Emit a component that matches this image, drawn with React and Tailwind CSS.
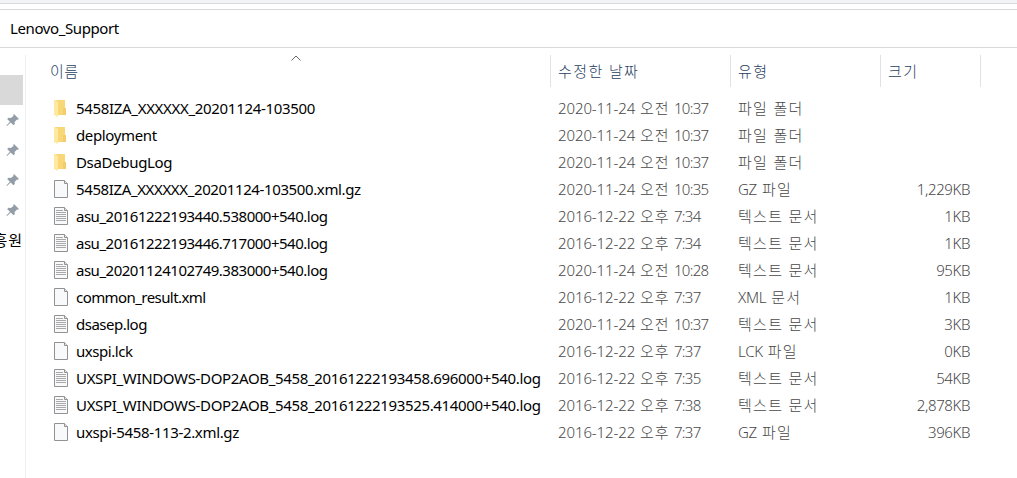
import clsx from 'clsx';

const files = [
    { name: '5458IZA_XXXXXX_20201124-103500', date: '2020-11-24', half: '오전', time: '10:37', kind: 'folder', type: '파일 폴더', tracking: 'tracking-[-0.32px]' },
    { name: 'deployment', date: '2020-11-24', half: '오전', time: '10:37', kind: 'folder', type: '파일 폴더', tracking: 'tracking-[-0.36px]' },
    { name: 'DsaDebugLog', date: '2020-11-24', half: '오전', time: '10:37', kind: 'folder', type: '파일 폴더', tracking: 'tracking-[-0.33px]' },
    { name: '5458IZA_XXXXXX_20201124-103500.xml.gz', date: '2020-11-24', half: '오전', time: '10:35', kind: 'file', ext: 'GZ', type: '파일', size: '1,229KB', tracking: 'tracking-[-0.38px]' },
    { name: 'asu_20161222193440.538000+540.log', date: '2016-12-22', half: '오후', time: '7:34', kind: 'text', type: '텍스트 문서', size: '1KB', tracking: 'tracking-[-0.49px]' },
    { name: 'asu_20161222193446.717000+540.log', date: '2016-12-22', half: '오후', time: '7:34', kind: 'text', type: '텍스트 문서', size: '1KB', tracking: 'tracking-[-0.49px]' },
    { name: 'asu_20201124102749.383000+540.log', date: '2020-11-24', half: '오전', time: '10:28', kind: 'text', type: '텍스트 문서', size: '95KB', tracking: 'tracking-[-0.49px]' },
    { name: 'common_result.xml', date: '2016-12-22', half: '오후', time: '7:37', kind: 'file', ext: 'XML', type: '문서', size: '1KB', tracking: 'tracking-[-0.57px]' },
    { name: 'dsasep.log', date: '2020-11-24', half: '오전', time: '10:37', kind: 'text', type: '텍스트 문서', size: '3KB', tracking: 'tracking-[-0.5px]' },
    { name: 'uxspi.lck', date: '2016-12-22', half: '오후', time: '7:37', kind: 'file', ext: 'LCK', type: '파일', size: '0KB', tracking: 'tracking-[-0.45px]' },
    { name: 'UXSPI_WINDOWS-DOP2AOB_5458_20161222193458.696000+540.log', date: '2016-12-22', half: '오후', time: '7:35', kind: 'text', type: '텍스트 문서', size: '54KB', tracking: 'tracking-[-0.34px]' },
    { name: 'UXSPI_WINDOWS-DOP2AOB_5458_20161222193525.414000+540.log', date: '2016-12-22', half: '오후', time: '7:38', kind: 'text', type: '텍스트 문서', size: '2,878KB', tracking: 'tracking-[-0.34px]' },
    { name: 'uxspi-5458-113-2.xml.gz', date: '2016-12-22', half: '오후', time: '7:37', kind: 'file', ext: 'GZ', type: '파일', size: '396KB', tracking: 'tracking-[-0.34px]' },
];

const FolderIcon = () => (
    <svg width="16" height="20" viewBox="0 0 16 20">
        <path d="M2 2h10v8h1v7H2z" fill="#f7d778" />
        <path d="M10 10h3v7h-3z" fill="#f3cd6c" />
        <path d="M1 2h1l3 2v15l-4-2z" fill="#ffe8a0" />
    </svg>
);

const FileIcon = ({ lines }) => (
    <svg width="16" height="20" viewBox="0 0 16 20">
        <path d="M1.5 1.5h10l3 3v14h-13z" fill="#f8f9fa" stroke="#929292" />
        <path d="M11.5 1.5v3h3" fill="#e4e4e4" stroke="#929292" />
        {lines && <path d="M3 4.5h7M3 6.5h10M3 8.5h10M3 10.5h10M3 12.5h10M3 14.5h10" stroke="#a8a8a8" />}
    </svg>
);

const PinIcon = () => (
    <svg width="14" height="14" viewBox="0 0 14 14" fill="#929da7">
        <path d="M8 1l5 5-1 .7-1-.2-2.4 2.4.2 2.1-1.2 1.3-2.9-2.9L1 13l-.6-.6 3.5-3.7L1.2 6l1.2-1.2 2.4.1L7.5 3 7.3 1.8z" />
    </svg>
);

const Sidebar = () => (
    <div className="mt-[7px] w-[26px] shrink-0 overflow-hidden border-r border-[#f0f0f0] pt-5">
        <div className="h-[30px] w-[23px] bg-[#d9d9d9]"></div>
        {[0, 1, 2, 3].map((idx) => (
            <div key={idx} className="flex h-[30px] items-center pl-1.5">
                <PinIcon />
            </div>
        ))}
        <div className="flex h-[30px] w-[23px] items-center justify-end whitespace-nowrap tracking-[1px]">흥원</div>
    </div>
);

const FileRow = ({ file }) => (
    <div className="flex h-[27px] items-center whitespace-nowrap text-[#484848]">
        <div className="flex w-[505px] items-center">
            <div className="w-[23px] pb-px">
                {file.kind === 'folder' ? <FolderIcon /> : <FileIcon lines={file.kind === 'text'} />}
            </div>
            <span className={clsx('pb-px text-black', file.tracking)}>{file.name}</span>
        </div>
        <div className="flex w-[180px] pb-px font-light">
            <span className="w-[82px] tracking-[-0.1px]">{file.date}</span>
            <span className="w-[34px] tracking-[1px]">{file.half}</span>
            <span className="tracking-[-0.7px]">{file.time}</span>
        </div>
        <div className="flex w-[133px] gap-[5px] pb-px font-light">
            {file.ext && <span className="tracking-[-0.3px]">{file.ext}</span>}
            <span className="tracking-[1.3px]">{file.type}</span>
        </div>
        <div className="w-[99px] pb-px text-right font-light tracking-[-0.4px]">{file.size}</div>
    </div>
);

const columns = [
    { label: '수정한 날짜', width: 'w-[180px]' },
    { label: '유형', width: 'w-[150px]' },
    { label: '크기', width: 'w-[100px]' },
];

const App = () => (
    <div className="flex h-[478px] w-[1017px] flex-col overflow-hidden bg-white font-['Noto_Sans','Noto_Sans_CJK_KR',sans-serif] text-[15px] leading-5 text-black">
        <div className="h-1 border-b border-[#d9dbde] bg-[#f3f4f6]"></div>
        <div className="mt-[5px] flex h-[39px] shrink-0 items-center border-y border-[#d9d9d9] pb-0.5 pl-2.5 tracking-[-0.4px]">Lenovo_Support</div>
        <div className="flex min-h-0 flex-1">
            <Sidebar />
            <div className="flex flex-1 flex-col pt-[7px]">
                <div className="flex h-[32px] font-light text-[#27405f]">
                    <div className="flex w-[524px] items-center pl-6">
                        <span className="w-[241px] tracking-[0.5px]">이름</span>
                        <svg className="self-start" width="10" height="7" viewBox="0 0 10 7" fill="none">
                            <path d="M.5 5.5L5 1l4.5 4.5" stroke="#666" />
                        </svg>
                    </div>
                    {columns.map((col) => (
                        <div key={col.label} className={clsx('flex items-center border-l border-[#e2e2e2] pl-[7px] tracking-[1.4px]', col.width)}>
                            {col.label}
                        </div>
                    ))}
                    <div className="border-l border-[#e2e2e2]"></div>
                </div>
                <div className="pt-2 pl-[27px]">
                    {files.map((file) => (
                        <FileRow key={file.name} file={file} />
                    ))}
                </div>
            </div>
        </div>
    </div>
);

export default App;
